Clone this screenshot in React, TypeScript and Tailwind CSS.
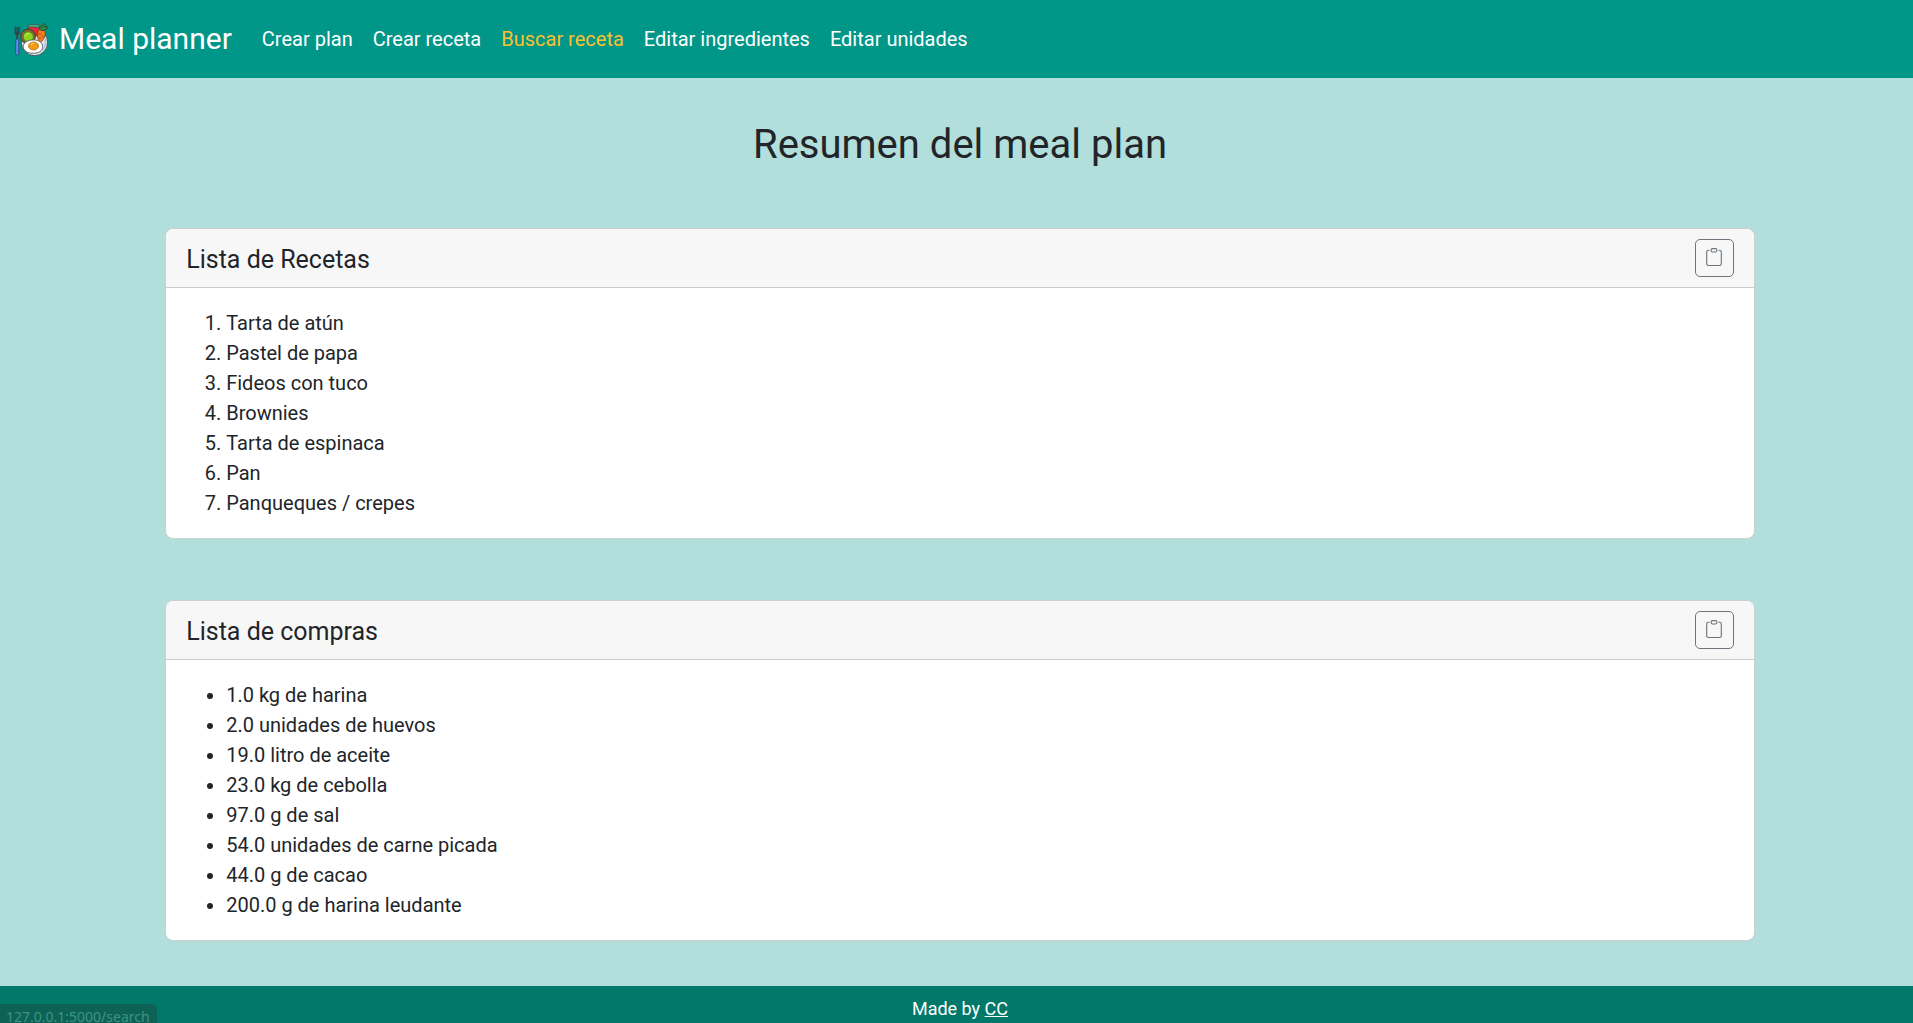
import type { ReactNode } from "react";
import { BsClipboard } from "react-icons/bs";

const links = [
  { label: "Crear plan", active: false },
  { label: "Crear receta", active: false },
  { label: "Buscar receta", active: true },
  { label: "Editar ingredientes", active: false },
  { label: "Editar unidades", active: false },
];

const recipes = [
  "Tarta de atún",
  "Pastel de papa",
  "Fideos con tuco",
  "Brownies",
  "Tarta de espinaca",
  "Pan",
  "Panqueques / crepes",
];

const groceries = [
  "1.0 kg de harina",
  "2.0 unidades de huevos",
  "19.0 litro de aceite",
  "23.0 kg de cebolla",
  "97.0 g de sal",
  "54.0 unidades de carne picada",
  "44.0 g de cacao",
  "200.0 g de harina leudante",
];

function MealLogo() {
  return (
    <svg viewBox="0 0 34 34" className="size-[34px] shrink-0" aria-hidden="true">
      {/* plate */}
      <circle cx="20.5" cy="20.5" r="13.2" fill="#dfe8ee" stroke="#37474f" strokeWidth="0.9" />
      <path d="M29 12a12 12 0 0 1-3 19c5-5 6-12 3-19z" fill="#b4c8d6" />
      {/* watermelon */}
      <path d="M14 3.5c5-1 11-.5 15 1.500l-5 9.500-9-3z" fill="#e8283c" stroke="#37474f" strokeWidth="0.7" />
      <path d="M13.500 3c5-1.200 11.500-.8 15.500 1.500l-1.200 2.200c-4-1.700-9-2.200-13.800-1.500z" fill="#43b883" stroke="#37474f" strokeWidth="0.7" />
      {/* carrot */}
      <path d="M24.200 8.500c2-1.700 5.500-1 6.800.8.6 4-1.500 9.500-4.500 11.200-2.700-1-3.500-7-2.300-12z" fill="#f57c1f" stroke="#7a3c10" strokeWidth="0.7" />
      <path d="M24.500 11.500l3 .6M27.500 14.500l2.800.4M24.600 16l2.600.5" stroke="#a84a10" strokeWidth="0.8" />
      <path d="M28 8.500c-2.500-.8-3.500-2.500-2.800-4 1.500-.2 2.300.8 2.600 1.600.2-2.300 1.200-4 2.800-4.700.9 1.300.7 2.700.2 3.700 1.200-.7 2.500-.6 3.200.1-.7 2-3 3.500-6 3.300z" fill="#2e8b4a" stroke="#24452f" strokeWidth="0.9" />
      {/* avocado */}
      <circle cx="14" cy="14.500" r="7.400" fill="#7b6a35" stroke="#3e3420" strokeWidth="0.9" />
      <circle cx="14.300" cy="14.800" r="5" fill="#8ed321" stroke="#4a7a18" strokeWidth="0.7" />
      <path d="M11 14a3.500 3.500 0 0 1 4-2.500" stroke="#c8f06a" strokeWidth="1" fill="none" />
      {/* fried egg */}
      <path d="M9.500 26.500c-1.500-4 2-8 8-8.500 6-.8 11 2 11.200 6.500.2 4.200-4 7-9.500 6.700-4 .4-8.400-1.200-9.700-4.700z" fill="#fff" stroke="#37474f" strokeWidth="0.8" />
      <ellipse cx="19.500" cy="24" rx="5" ry="4" fill="#f59a12" stroke="#a8690c" strokeWidth="0.7" />
      <path d="M17 23c.6-1.300 2-1.700 3.200-1.500" stroke="#ffd54a" strokeWidth="1.200" fill="none" />
      {/* fork */}
      <path d="M.8 5v5.500c0 1.800 1 2.500 1.700 2.800V17h1.400v-3.700c.8-.3 1.700-1 1.700-2.800V5h-1v5h-1V5h-.9v5h-1V5z" fill="#37424a" stroke="#37424a" strokeWidth="0.4" />
      <rect x="1.700" y="17" width="3" height="16" rx="1.400" fill="#5b8def" stroke="#26406e" strokeWidth="0.700" />
    </svg>
  );
}

function Card({ title, children }: { title: string; children: ReactNode }) {
  return (
    <section className="rounded-lg border border-[#cccfcf] bg-white">
      <div className="flex items-center justify-between rounded-t-lg border-b border-[#c9cbcb] bg-[#f7f7f7] px-5 py-2.5">
        <h2 className="pt-1 text-[25px] leading-[30px]">{title}</h2>
        <button
          type="button"
          aria-label={`Copiar ${title}`}
          className="flex h-[38px] w-[39px] items-center justify-center rounded-[5px] border border-[#6c757d] pb-0.5 text-[#6c757d]"
        >
          <BsClipboard className="size-[18px]" />
        </button>
      </div>
      <div className="p-5">{children}</div>
    </section>
  );
}

export default function App() {
  return (
    <div className="flex min-h-screen flex-col bg-[#b2dfdb] font-[Roboto,sans-serif] text-xl leading-[30px] text-[#212529]">
      <nav className="flex h-[78px] items-center bg-[#009688] pl-3.5 text-white">
        <a href="#" className="flex items-center gap-[11px] pr-[30px]">
          <MealLogo />
          <span className="text-[30px] leading-10">Meal planner</span>
        </a>
        <ul className="flex gap-5">
          {links.map((link) => (
            <li key={link.label}>
              <a href="#" className={link.active ? "text-[#fbc02d]" : "text-white"}>
                {link.label}
              </a>
            </li>
          ))}
        </ul>
      </nav>

      <main className="flex-1 pt-[43px] pb-[45px] pl-[7px]">
        <h1 className="text-center text-[40px] leading-[48px]">Resumen del meal plan</h1>
        <div className="mx-auto mt-[59px] flex w-[83.4%] flex-col gap-[61px]">
          <Card title="Lista de Recetas">
            <ol className="list-decimal pl-10">
              {recipes.map((item) => (
                <li key={item}>{item}</li>
              ))}
            </ol>
          </Card>
          <Card title="Lista de compras">
            <ul className="list-disc pl-10">
              {groceries.map((item) => (
                <li key={item}>{item}</li>
              ))}
            </ul>
          </Card>
        </div>
      </main>

      <footer className="bg-[#00796b] pt-2 pl-[7px] text-center text-lg leading-[29px] text-white">
        Made by{" "}
        <a href="#" className="underline">
          CC
        </a>
      </footer>

      <div className="fixed bottom-0 left-0 h-[19px] w-[157px] overflow-hidden rounded-tr-md bg-[#0e6155] pt-px pl-1.5 font-['Noto_Sans',sans-serif] text-sm leading-6 text-[#3c9484]">
        127.0.0.1:5000/search
      </div>
    </div>
  );
}
